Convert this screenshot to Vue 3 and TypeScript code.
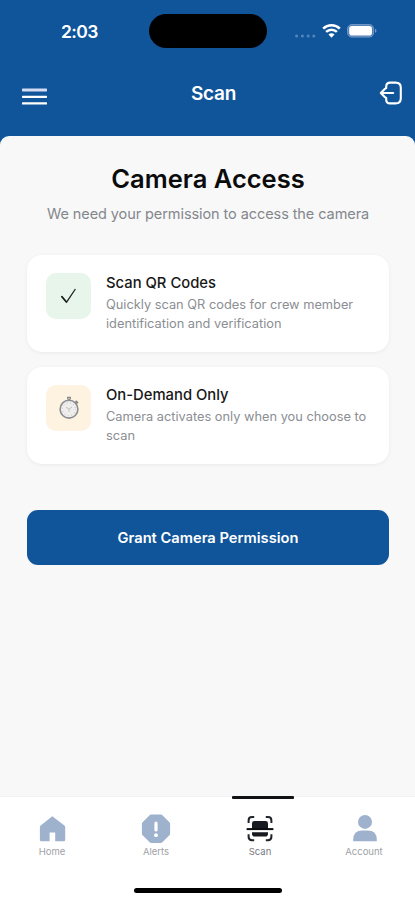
<script setup lang="ts">
interface Feature {
  kind: 'check' | 'timer'
  title: string
  lines: string[]
}

interface Tab {
  id: 'home' | 'alerts' | 'scan' | 'account'
  label: string
}

const features: Feature[] = [
  {
    kind: 'check',
    title: 'Scan QR Codes',
    lines: ['Quickly scan QR codes for crew member', 'identification and verification'],
  },
  {
    kind: 'timer',
    title: 'On-Demand Only',
    lines: ['Camera activates only when you choose to', 'scan'],
  },
]

const tabs: Tab[] = [
  { id: 'home', label: 'Home' },
  { id: 'alerts', label: 'Alerts' },
  { id: 'scan', label: 'Scan' },
  { id: 'account', label: 'Account' },
]

const activeTab: Tab['id'] = 'scan'
</script>

<template>
  <div class="screen">
    <header class="header">
      <div class="status">
        <span class="time">2:03</span>
        <div class="island"></div>
        <div class="indicators">
          <svg class="dots" width="22" height="4" viewBox="0 0 22 4">
            <circle cx="2.6" cy="2" r="1.5" />
            <circle cx="8.4" cy="2" r="1.5" />
            <circle cx="14.2" cy="2" r="1.5" />
            <circle cx="19.8" cy="2" r="1.5" />
          </svg>
          <svg class="wifi" width="19" height="14" viewBox="0 0 19 14">
            <path d="M1.2 4.7a12 12 0 0 1 16.6 0" />
            <path d="M4.1 7.8a7.8 7.8 0 0 1 10.8 0" />
            <path class="tip" d="M9.5 13.7 6.5 10.6a4.2 4.2 0 0 1 6 0z" />
          </svg>
          <svg class="battery" width="30" height="14" viewBox="0 0 30 14">
            <rect class="shell" x=".6" y=".6" width="26" height="12.4" rx="4.2" />
            <rect class="charge" x="2.2" y="2.1" width="22.8" height="9.4" rx="2.8" />
            <path class="cap" d="M28 4.8c2 .7 2 3.3 0 4z" />
          </svg>
        </div>
      </div>
      <div class="navbar">
        <button class="icon-button" aria-label="Menu">
          <svg width="25" height="18" viewBox="0 0 25 18">
            <rect y=".6" width="25" height="2.8" rx=".6" fill="#d3dcf2" />
            <rect y="7.8" width="25" height="2.1" rx=".6" fill="#fff" />
            <rect y="14.3" width="25" height="2.2" rx=".6" fill="#fff" />
          </svg>
        </button>
        <h1 class="nav-title">Scan</h1>
        <button class="icon-button logout" aria-label="Log out">
          <svg width="24" height="24" viewBox="0 0 24 24">
            <path d="M7.2 7.2V5.6Q7.2 1.6 11.2 1.6h5.4q5.2 0 5.2 5.2v10.4q0 5.2-5.2 5.2h-5.4q-4 0-4-4v-1.6M14.2 12H2M6 7.8 1.8 12 6 16.2" />
          </svg>
        </button>
      </div>
    </header>

    <main class="panel">
      <h2 class="heading">Camera Access</h2>
      <p class="lead">We need your permission to access the camera</p>

      <section class="cards">
        <article v-for="feature in features" :key="feature.kind" class="card">
          <div class="badge" :class="feature.kind">
            <svg v-if="feature.kind === 'check'" width="18" height="18" viewBox="0 0 18 18">
              <path d="M1.5 9.2 6.6 15.2 15.4 2" fill="none" stroke="#1c211e" stroke-width="1.25" />
              <path d="M1.5 9.2 6.4 15" fill="none" stroke="#1c211e" stroke-width="1.6" />
            </svg>
            <svg v-else width="24" height="26" viewBox="0 0 24 26">
              <path d="M10.8 4.4V2.4h2.4v2M12 4v2" fill="none" stroke="#858789" stroke-width="1.4" />
              <path d="m18.6 6 2.4 2.2M18.2 8.4l1.6-1.6" fill="none" stroke="#808284" stroke-width="1.7" />
              <circle cx="12" cy="14.2" r="8.9" fill="#efeeec" stroke="#8b8e91" stroke-width="1.6" />
              <circle cx="12" cy="14.2" r="6.5" fill="none" stroke="#c4c5c5" stroke-width="1" stroke-dasharray="1 2.4" />
              <path d="m9 12 3 2.2 3-2.2M12 14.2v2.8" fill="none" stroke="#bbb" stroke-width=".9" />
            </svg>
          </div>
          <div class="copy">
            <h3>{{ feature.title }}</h3>
            <p><span v-for="line in feature.lines" :key="line">{{ line }}</span></p>
          </div>
        </article>
      </section>

      <button class="grant">Grant Camera Permission</button>
    </main>

    <nav class="tabbar">
      <div class="tabs">
        <a v-for="tab in tabs" :key="tab.id" class="tab" :class="[tab.id, { active: tab.id === activeTab }]">
          <svg v-if="tab.id === 'home'" width="30" height="30" viewBox="0 0 30 30" fill="#9eb1cd">
            <path d="M15.3 2.2 27.4 11.6q.8.6.8 1.6v12.9q0 1.1-1.1 1.1H18.2v-8.6h-5.6v8.6H4q-1.1 0-1.1-1.1V13.2q0-1 .8-1.6z" />
          </svg>
          <svg v-else-if="tab.id === 'alerts'" width="30" height="30" viewBox="0 0 30 30">
            <path d="M10.3.6h9.4q1 0 1.7.7l7 7q.7.7.7 1.6v9.6q0 1-.7 1.7l-7 7q-.7.7-1.7.7h-9.4q-1 0-1.7-.7l-7-7q-.7-.7-.7-1.7V9.9q0-1 .7-1.6l7-7q.7-.7 1.7-.7z" fill="#9eb1cd" />
            <path d="M15 9v7" stroke="#fff" stroke-width="3.2" stroke-linecap="round" />
            <circle cx="15" cy="21.2" r="1.9" fill="#fff" />
          </svg>
          <svg v-else-if="tab.id === 'scan'" width="30" height="30" viewBox="0 0 30 30">
            <path d="M3.6 9V6.5q0-3.4 3.4-3.4h2.2M20.8 3.1H23q3.4 0 3.4 3.4V9M26.4 20.3v2.5q0 3.4-3.4 3.4h-2.2M9.2 26.2H7q-3.4 0-3.4-3.4v-2.5" fill="none" stroke="#202329" stroke-width="2" />
            <path d="M7 15V9.4q0-2.4 2.4-2.4h11.2q2.4 0 2.4 2.4V15zM7 18.2h16v1.6q0 2.8-2.8 2.8H9.8q-2.8 0-2.8-2.8z" fill="#171a20" />
            <path d="M1.6 15.1h26.8" stroke="#0a0c10" stroke-width="2" />
          </svg>
          <svg v-else width="30" height="30" viewBox="0 0 30 30" fill="#9eb1cd">
            <circle cx="15" cy="7.9" r="7" />
            <path d="M3.2 27.2V25.6q0-9.2 9.2-9.2h5.2q9.2 0 9.2 9.2v1.6z" />
          </svg>
          <span>{{ tab.label }}</span>
        </a>
      </div>
      <div class="home-indicator"></div>
    </nav>
  </div>
</template>

<style>
body {
  background: #10559a;
}
</style>

<style scoped>
* {
  box-sizing: border-box;
}

.screen {
  display: flex;
  flex-direction: column;
  width: 100%;
  height: 900px;
  overflow: hidden;
  background: #10559a;
  font-family: Inter, 'Liberation Sans', sans-serif;
}

h1,
h2,
h3,
p {
  margin: 0;
}

button {
  border: 0;
  font-family: inherit;
}

svg {
  display: block;
}

.header {
  flex: 0 0 136px;
}

.status {
  display: grid;
  grid-template-columns: 149px 118px 1fr;
  align-items: center;
  height: 62px;
}

.time {
  padding-left: 61px;
  color: #fff;
  font-size: 17.5px;
  font-weight: 600;
  letter-spacing: -0.6px;
}

.island {
  height: 34px;
  border-radius: 17px;
  background: #000;
}

.indicators {
  display: flex;
  align-items: center;
  padding-left: 27px;
}

.dots {
  margin-top: 9px;
  fill: #5585ba;
}

.wifi {
  margin-left: 6px;
  fill: none;
  stroke: #fff;
  stroke-width: 2.5;
}

.wifi .tip {
  fill: #fff;
  stroke: none;
}

.battery {
  margin-left: 6px;
}

.shell {
  fill: #4e7eb4;
  stroke: #779cca;
}

.charge {
  fill: #fff;
}

.cap {
  fill: #779cca;
}

.navbar {
  display: grid;
  grid-template-columns: 60px 1fr 60px;
  align-items: center;
  height: 62px;
}

.icon-button {
  padding: 7px 0 0 22px;
  background: none;
}

.logout {
  padding: 0 0 0 24px;
}

.logout svg {
  fill: none;
  stroke: #fff;
  stroke-width: 2.1;
  stroke-linecap: round;
  stroke-linejoin: round;
}

.nav-title {
  padding-left: 12px;
  color: #fff;
  font-size: 19px;
  font-weight: 600;
  letter-spacing: -0.3px;
  text-align: center;
}

.panel {
  flex: 1;
  padding: 27px 26px 0 27px;
  border-radius: 9px 9px 0 0;
  background: #f8f8f8;
}

.heading {
  color: #0b0b0c;
  font-size: 25.5px;
  font-weight: 600;
  line-height: 32px;
  text-align: center;
  white-space: nowrap;
}

.lead {
  margin-top: 9px;
  color: #83878c;
  font-size: 14.5px;
  line-height: 20px;
  letter-spacing: -0.08px;
  text-align: center;
  white-space: nowrap;
}

.cards {
  display: grid;
  gap: 15px;
  margin-top: 31px;
}

.card {
  display: flex;
  gap: 15px;
  height: 97px;
  padding: 18px 19px;
  border-radius: 15px;
  background: #fff;
  box-shadow: 0 1px 4px rgb(0 0 0 / 6%);
}

.badge {
  display: grid;
  flex: 0 0 45px;
  place-items: center;
  height: 46px;
  border-radius: 10px;
}

.badge.check {
  background: #e7f5eb;
}

.badge.timer {
  background: #fef2e0;
}

.copy h3 {
  color: #171717;
  font-size: 14.8px;
  font-weight: 500;
  line-height: 20px;
  white-space: nowrap;
}

.copy p {
  margin-top: 2px;
  color: #8b8e93;
  font-size: 12.8px;
  line-height: 19px;
  white-space: nowrap;
}

.copy span {
  display: block;
}

.grant {
  display: block;
  width: 100%;
  height: 55px;
  margin-top: 46px;
  padding: 0;
  border-radius: 11px;
  background: #10559a;
  color: #fff;
  font-size: 14.7px;
  font-weight: 600;
}

.tabbar {
  display: flex;
  flex: 0 0 103px;
  flex-direction: column;
  align-items: center;
  background: #fff;
  box-shadow: 0 -1px 1px rgb(0 0 0 / 2%);
}

.tabs {
  display: grid;
  grid-template-columns: repeat(4, 104px);
  width: 415px;
  height: 91px;
}

.tab {
  position: relative;
  display: flex;
  flex-direction: column;
  align-items: center;
  padding-top: 17px;
  color: #a0a2a6;
  font-size: 9.5px;
  line-height: 12px;
}

.tab span {
  margin-top: 2px;
}

.account svg {
  margin-left: 2px;
}

.tab.active {
  color: #777a7f;
}

.tab.active::before {
  position: absolute;
  top: -1px;
  left: 24px;
  width: 62px;
  height: 3px;
  border-radius: 1px;
  background: #101216;
  content: '';
}

.home-indicator {
  width: 148px;
  height: 5px;
  border-radius: 3px;
  background: #000;
}
</style>
